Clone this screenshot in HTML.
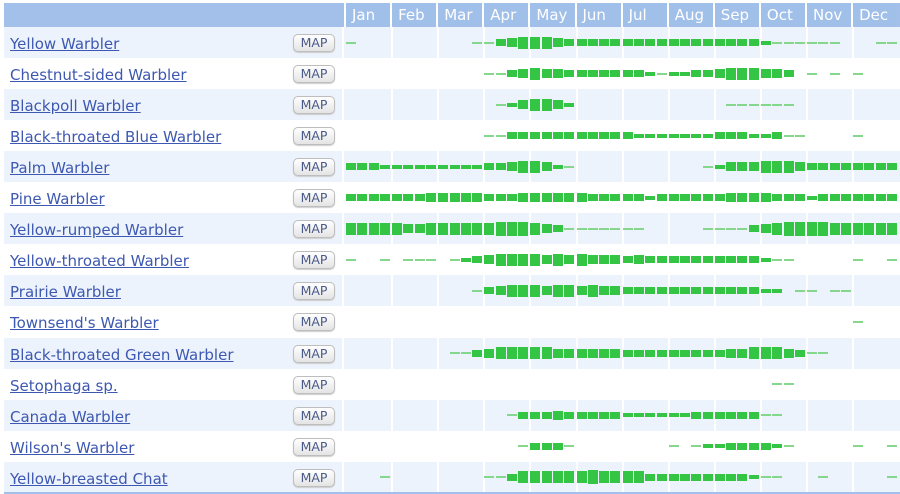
<!DOCTYPE html>
<html><head><meta charset="utf-8"><style>
*{margin:0;padding:0;box-sizing:border-box}
body{width:900px;height:494px;background:#fff;position:relative;overflow:hidden;font-family:"DejaVu Sans","Liberation Sans",sans-serif}
#hdr{position:absolute;left:4px;top:3px;width:896px;height:24px;background:#a3c0ea}
.mh{position:absolute;top:3px;height:24px;color:#fff;font-size:15px;line-height:25px;padding-left:6px;border-left:2px solid #fff;background:#a0bfe9}
.row{position:absolute;left:4px;width:896px;height:31px}
.row.alt{background:#edf3fd}
.name{position:absolute;left:6px;top:8px;font-size:15px;color:#3d58b0;text-decoration:underline;white-space:nowrap}
.map{position:absolute;left:289px;top:7px;width:42px;height:18px;border:1px solid #bdbdbd;border-radius:5px;background:linear-gradient(#fff,#e4e4e4);font-size:12.5px;color:#4a5a8a;text-align:center;line-height:16px;box-shadow:0 1px 1px #ccc}
.vl{position:absolute;top:0;width:2px;height:31px;background:#fff}
.b{position:absolute;background:#33c543}
.b.l{background:#84d78d}
#bot{position:absolute;left:4px;top:492px;width:896px;height:2px;background:#a3c0ea}
</style></head><body>
<div id="hdr"></div>
<div id="wrap"></div>
<div id="bot"></div>
<script>
var months=["Jan","Feb","Mar","Apr","May","Jun","Jul","Aug","Sep","Oct","Nov","Dec"];
var X0=346,MW=46.1;
var H=document.body;
months.forEach(function(m,i){var d=document.createElement('div');d.className='mh';d.style.left=(X0+i*MW-2)+'px';d.style.width=MW+'px';d.textContent=m;H.appendChild(d);});
var data=[
["Yellow Warbler","1"+"0000000000"+"11"+"345554"+"33333333333333333"+"2"+"111111"+"000"+"11"],
["Chestnut-sided Warbler","000000000000"+"11"+"34544"+"3333333"+"2122334555443"+"010101"+"000"],
["Blackpoll Warbler","0000000000000"+"1245542"+"0000000000000"+"111111"+"000000000"],
["Black-throated Blue Warbler","000000000000"+"11"+"33333333333"+"2222222"+"333"+"22"+"3"+"11"+"0000"+"1"+"000"],
["Palm Warbler","333"+"222222222"+"33455421"+"00000000000"+"124445554"+"33333333"],
["Pine Warbler","3333333"+"44444"+"333"+"444444"+"33333"+"2"+"33333"+"34444"+"33323"+"333333"],
["Yellow-rumped Warbler","55555"+"44"+"555555"+"666"+"543"+"1"+"111111"+"00000"+"1111"+"345"+"6666"+"555555"],
["Yellow-throated Warbler","1001011101"+"2345555454"+"544434"+"3333333333"+"211"+"00000"+"1"+"00"+"1"],
["Prairie Warbler","00000000000"+"1"+"345554554544"+"333333333333"+"22"+"0"+"11"+"0"+"11"+"0000"],
["Townsend's Warbler","00000000000000000000000000000000000000000000"+"1000"],
["Black-throated Green Warbler","000000000"+"11"+"345555544"+"4444"+"33333333"+"3445554"+"3"+"11"+"000000"],
["Setophaga sp.","0000000000000000000000000000000000000"+"11"+"000000000"],
["Canada Warbler","00000000000000"+"1"+"33343"+"3333"+"222222"+"33"+"3333"+"11"+"0000000000"],
["Wilson's Warbler","000000000000000"+"13331"+"00000000"+"1"+"0"+"12233332"+"1"+"00000"+"1"+"00"+"1"],
["Yellow-breasted Chat","0001"+"00000000"+"113"+"55555"+"565555"+"333333333"+"211"+"000"+"1"+"00000"+"1"]
];
var HT=[0,2,4,7,9,12,14];
var W=document.getElementById('wrap');
data.forEach(function(r,i){
 var y=27+i*31.05;
 var row=document.createElement('div');row.className='row'+(i%2==0?' alt':'');row.style.top=y+'px';
 var h='<a class="name">'+r[0]+'</a><div class="map">MAP</div><div class="vl" style="left:338px"></div>';
 for(var m=1;m<12;m++){h+='<div class="vl" style="left:'+(X0+m*MW-4-1)+'px"></div>';}
 for(var w=0;w<48;w++){var v=+r[1][w];if(!v)continue;var ht=HT[v];
  var x=X0+Math.floor(w/4)*MW+(w%4)*11.3-4;
  h+='<div class="b'+(v==1?' l':'')+'" style="left:'+x.toFixed(1)+'px;top:'+(15.5-ht/2)+'px;width:10px;height:'+ht+'px"></div>';}
 row.innerHTML=h;W.appendChild(row);
});
</script>
</body></html>
